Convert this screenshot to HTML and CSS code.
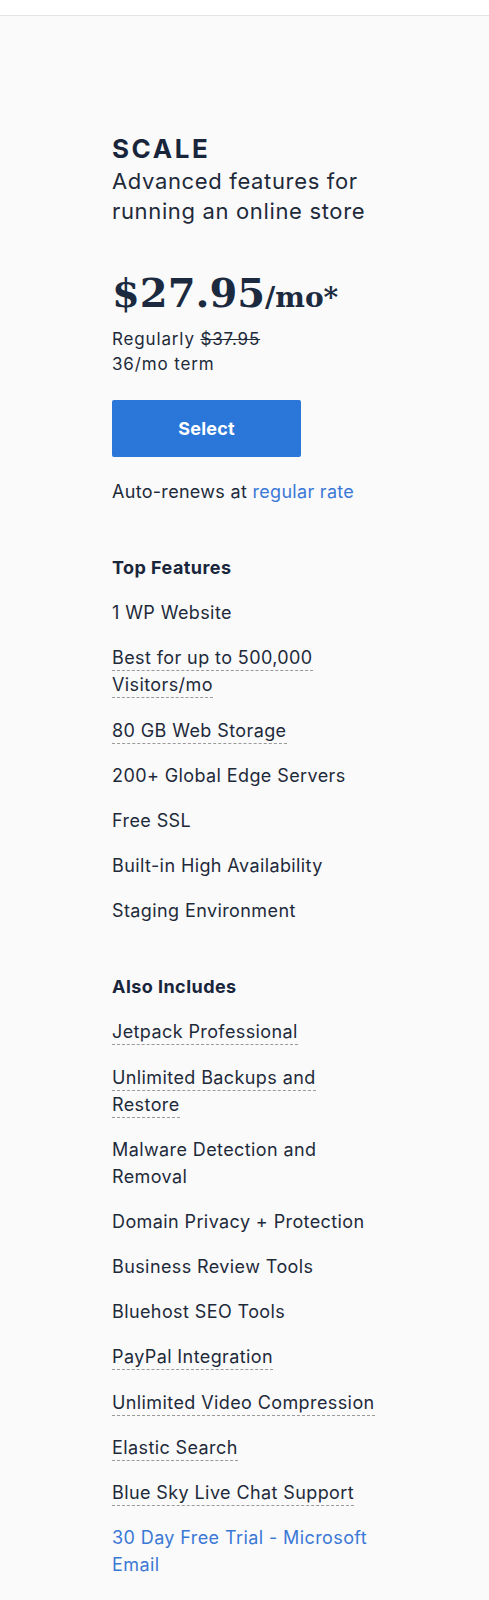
FILE: index.html
```html
<!DOCTYPE html>
<html lang="en">
<head>
<meta charset="utf-8">
<title>SCALE plan</title>
<link rel="stylesheet" href="styles.css">
</head>
<body>
<header class="topbar"></header>
<main class="plan">
  <h2 class="plan-name">SCALE</h2>
  <p class="plan-desc">Advanced features for running an online store</p>
  <div class="price">$27.95<span class="price-unit">/mo*</span></div>
  <div class="regular">
    <div>Regularly <s>$37.95</s></div>
    <div>36/mo term</div>
  </div>
  <button class="select-btn" type="button">Select</button>
  <p class="renew">Auto-renews at <a href="#" class="link">regular rate</a></p>

  <section class="features">
    <h3 class="features-title">Top Features</h3>
    <ul class="feature-list">
      <li>1 WP Website</li>
      <li><span class="tip">Best for up to 500,000 Visitors/mo</span></li>
      <li><span class="tip">80 GB Web Storage</span></li>
      <li>200+ Global Edge Servers</li>
      <li>Free SSL</li>
      <li>Built-in High Availability</li>
      <li>Staging Environment</li>
    </ul>
  </section>

  <section class="features features-also">
    <h3 class="features-title">Also Includes</h3>
    <ul class="feature-list">
      <li><span class="tip">Jetpack Professional</span></li>
      <li><span class="tip">Unlimited Backups and Restore</span></li>
      <li>Malware Detection and Removal</li>
      <li>Domain Privacy + Protection</li>
      <li>Business Review Tools</li>
      <li>Bluehost SEO Tools</li>
      <li><span class="tip">PayPal Integration</span></li>
      <li><span class="tip">Unlimited Video Compression</span></li>
      <li><span class="tip">Elastic Search</span></li>
      <li><span class="tip">Blue Sky Live Chat Support</span></li>
      <li class="blue">30 Day Free Trial - Microsoft Email</li>
    </ul>
  </section>
</main>
</body>
</html>
```
FILE: styles.css
```css
html, body {
  margin: 0;
  padding: 0;
}
body {
  background: #fafafa;
  font-family: Inter, "Open Sans", sans-serif;
  color: #1e2a3a;
}
.topbar {
  height: 15px;
  background: #ffffff;
  border-bottom: 1px solid #e3e3e3;
}
.plan {
  padding: 117px 40px 20px 112px;
  max-width: 300px;
}
.plan-name {
  margin: 0;
  font-size: 26px;
  line-height: 32px;
  font-weight: 700;
  letter-spacing: 2.6px;
  color: #18253a;
}
.plan-desc {
  margin: 2px 0 0;
  font-size: 22px;
  line-height: 29.6px;
  letter-spacing: 0.65px;
  color: #1e2a3a;
  width: 265px;
}
.price {
  margin-top: 43px;
  font-family: "DejaVu Serif", serif;
  font-weight: 700;
  font-size: 40px;
  line-height: 48px;
  color: #1b2a3f;
}
.price-unit {
  font-size: 28px;
  line-height: 1;
}
.regular {
  margin-top: 10px;
  font-size: 17px;
  line-height: 25px;
  letter-spacing: 0.85px;
}
.regular s {
  text-decoration-thickness: 1px;
}
.select-btn {
  display: block;
  margin-top: 23px;
  width: 189px;
  height: 57px;
  border: none;
  border-radius: 2px;
  background: #2b76d9;
  color: #ffffff;
  font-family: Inter, sans-serif;
  font-size: 18px;
  font-weight: 700;
  letter-spacing: 0.2px;
  cursor: pointer;
}
.renew {
  margin: 21px 0 0;
  font-size: 18px;
  line-height: 27px;
  letter-spacing: 0.3px;
}
.link {
  color: #3a78d6;
  text-decoration: none;
}
.features {
  margin-top: 49px;
}
.features-also {
  margin-top: 49px;
}
.features-title {
  margin: 0;
  font-size: 18px;
  line-height: 27px;
  font-weight: 700;
  letter-spacing: 0.45px;
  color: #18253a;
}
.feature-list {
  list-style: none;
  margin: 18px 0 0;
  padding: 0;
  display: flex;
  flex-direction: column;
  gap: 18.2px;
  font-size: 18px;
  line-height: 27px;
  letter-spacing: 0.4px;
  width: 272px;
}
.tip {
  border-bottom: 1px dashed #9a9a9a;
  padding-bottom: 2px;
}
.blue {
  color: #3a78d6;
}
```
